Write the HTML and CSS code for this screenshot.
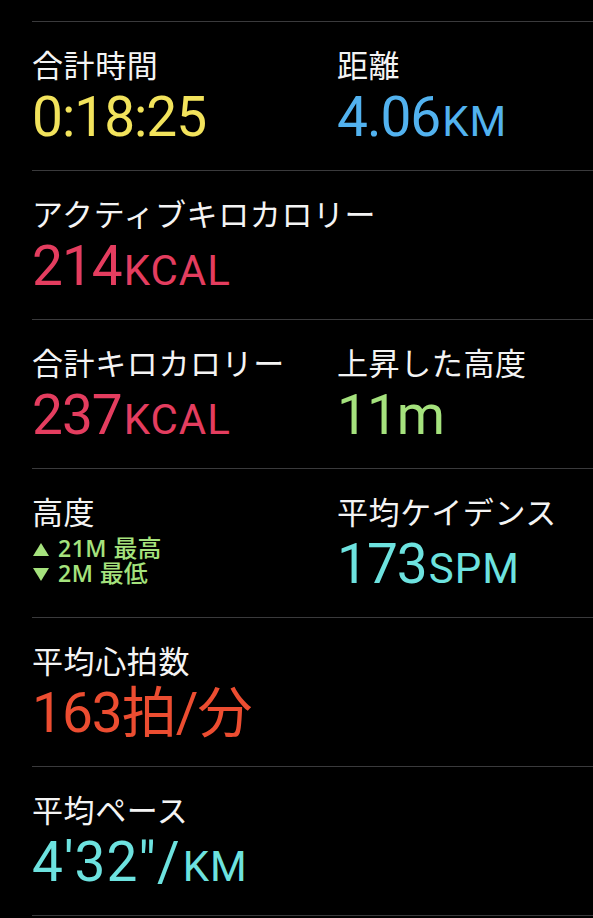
FILE: index.html
```html
<!DOCTYPE html>
<html lang="ja">
<head>
<meta charset="utf-8">
<title>ワークアウト</title>
<link rel="stylesheet" href="styles.css">
</head>
<body>
<main class="list">
  <section class="row">
    <div class="cell">
      <div class="label">合計時間</div>
      <div class="value yellow">0:18:25</div>
    </div>
    <div class="cell">
      <div class="label">距離</div>
      <div class="value blue">4.06<span class="unit">KM</span></div>
    </div>
  </section>
  <section class="row">
    <div class="cell wide">
      <div class="label">アクティブキロカロリー</div>
      <div class="value red">214<span class="unit">KCAL</span></div>
    </div>
  </section>
  <section class="row">
    <div class="cell">
      <div class="label">合計キロカロリー</div>
      <div class="value red">237<span class="unit">KCAL</span></div>
    </div>
    <div class="cell">
      <div class="label">上昇した高度</div>
      <div class="value green">11m</div>
    </div>
  </section>
  <section class="row">
    <div class="cell">
      <div class="label">高度</div>
      <div class="alt first"><span class="tri up"></span>21M <span class="cjk">最高</span></div>
      <div class="alt"><span class="tri down"></span>2M <span class="cjk">最低</span></div>
    </div>
    <div class="cell">
      <div class="label">平均ケイデンス</div>
      <div class="value cyan">173<span class="unit">SPM</span></div>
    </div>
  </section>
  <section class="row">
    <div class="cell wide">
      <div class="label">平均心拍数</div>
      <div class="value orange">163拍/分</div>
    </div>
  </section>
  <section class="row last">
    <div class="cell wide">
      <div class="label">平均ペース</div>
      <div class="value cyan pace">4&#39;32&quot;/<span class="unit">KM</span></div>
    </div>
  </section>
</main>
</body>
</html>
```
FILE: styles.css
```css
html, body {
  margin: 0;
  padding: 0;
  background: #000;
}

body {
  width: 593px;
  height: 918px;
  overflow: hidden;
  font-family: "Liberation Sans", "Noto Sans CJK JP", sans-serif;
  color: #f4f4f4;
}

.list {
  margin-top: 21px;
  padding-left: 32px;
}

.row {
  box-sizing: border-box;
  height: 149px;
  border-top: 1px solid #3a3a3c;
  display: grid;
  grid-template-columns: 305px 1fr;
  padding-top: 24px;
}

.row.last {
  border-bottom: 1px solid #3a3a3c;
  height: 150px;
}

.cell.wide {
  grid-column: 1 / span 2;
}

.label {
  font-family: "Noto Sans CJK JP", sans-serif;
  font-size: 31px;
  line-height: 36px;
  font-weight: 400;
  letter-spacing: 0.6px;
  color: #f4f4f4;
  white-space: nowrap;
}

.value {
  margin-top: 7px;
  font-family: "Roboto", "Noto Sans CJK JP", sans-serif;
  font-weight: 400;
  font-size: 55px;
  line-height: 56px;
  letter-spacing: -1px;
  white-space: nowrap;
}

.value.pace {
  letter-spacing: 1px;
}

.unit {
  font-size: 42px;
  letter-spacing: 1px;
  margin-left: 2px;
}

.alt {
  font-family: "Open Sans", "Noto Sans CJK JP", sans-serif;
  font-size: 23px;
  line-height: 25px;
  font-weight: 600;
  letter-spacing: 0.5px;
  color: #a5e27d;
  white-space: nowrap;
}

.alt .cjk {
  display: inline-block;
  font-family: "Noto Sans CJK JP", sans-serif;
  font-weight: 500;
  font-size: 24px;
  line-height: 22px;
  letter-spacing: 0;
  vertical-align: 0;
}

.alt.first {
  margin-top: 7px;
}

.tri {
  display: inline-block;
  width: 0;
  height: 0;
  margin-right: 9px;
  margin-left: 1px;
  border-left: 8.5px solid transparent;
  border-right: 8.5px solid transparent;
  vertical-align: 1px;
}

.tri.up {
  border-bottom: 13px solid #a5e27d;
}

.tri.down {
  border-top: 13px solid #a5e27d;
}

.yellow { color: #f2e35c; }
.blue { color: #52b2ef; }
.red { color: #e43d5f; }
.green { color: #a5e27d; }
.cyan { color: #6de2df; }
.orange { color: #ec4d31; }
```
